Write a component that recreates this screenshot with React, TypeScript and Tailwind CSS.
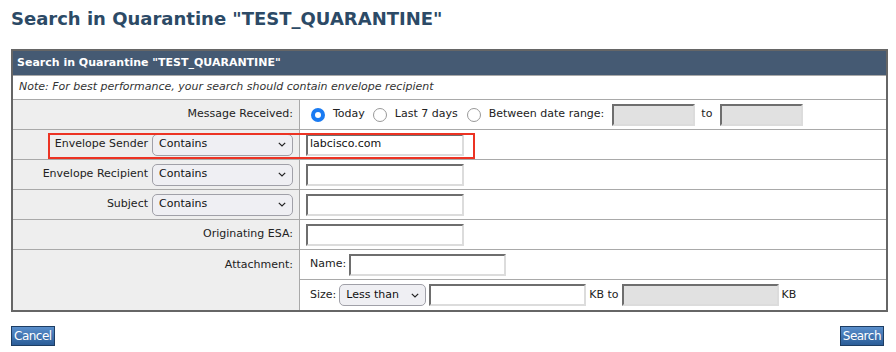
import React from "react";

const font = { fontFamily: 'Verdana, "DejaVu Sans", sans-serif' };

function Chevron() {
  return (
    <svg width="8" height="5" viewBox="0 0 8 5" className="shrink-0">
      <path d="M0.8 0.8 L4 4 L7.2 0.8" fill="none" stroke="#222" strokeWidth="1.2" />
    </svg>
  );
}

function Select({ label, w }: { label: string; w: string }) {
  return (
    <div
      className={`${w} h-[22px] rounded-[5px] border border-[#a0a0a8] bg-[#efeff3] flex items-center justify-between pl-[6px] pr-[6px] text-[11px] text-[#111]`}
    >
      <span>{label}</span>
      <Chevron />
    </div>
  );
}

function TextInput({ w, value, disabled }: { w: string; value?: string; disabled?: boolean }) {
  return (
    <div
      className={`${w} h-[22px] border-2 border-t-[#6e6e6e] border-l-[#6e6e6e] border-b-[#dcdcdc] border-r-[#dcdcdc] ${
        disabled ? "bg-[#e1e1e1]" : "bg-white"
      } flex items-center pl-[2px] text-[11px] text-[#111]`}
    >
      {value}
    </div>
  );
}

function Radio({ checked }: { checked?: boolean }) {
  return checked ? (
    <div className="w-[14px] h-[14px] rounded-full bg-[#1a7bf2] flex items-center justify-center">
      <div className="w-[6px] h-[6px] rounded-full bg-white" />
    </div>
  ) : (
    <div className="w-[14px] h-[14px] rounded-full border border-[#999999] bg-white" />
  );
}

function Row({ left, right, last }: { left: React.ReactNode; right: React.ReactNode; last?: boolean }) {
  return (
    <div className={`flex h-[30px] ${last ? "" : "border-b border-[#a9a9a9]"}`}>
      <div className="w-[287px] bg-[#eeeeee] border-r border-[#a9a9a9] flex items-center justify-end pr-[6px] gap-[4px] text-[11px] text-[#222]">
        {left}
      </div>
      <div className="flex-1 flex items-center pl-[6px] text-[11px] text-[#222]">{right}</div>
    </div>
  );
}

function Btn({ children }: { children: React.ReactNode }) {
  return (
    <button className="h-[20px] px-[2px] border border-[#1d3d63] bg-gradient-to-b from-[#5a8fcc] to-[#2b5d98] text-white text-[12px] tracking-[-0.5px] leading-[18px]">
      {children}
    </button>
  );
}

export default function App() {
  return (
    <div className="w-[896px] h-[352px] bg-white pl-[11px] overflow-hidden" style={font}>
      <div className="h-[49px] pt-[6px] text-[18px] leading-[26px] font-bold text-[#2c4a66]">
        Search in Quarantine "TEST_QUARANTINE"
      </div>
      <div className="w-[877px] border-2 border-[#666666]">
        <div className="h-[24px] bg-[#455a73] text-white font-bold text-[11px] flex items-center pl-[4px]">
          Search in Quarantine "TEST_QUARANTINE"
        </div>
        <div className="h-[25px] border-t border-[#a9a9a9] border-b flex items-center pl-[6px] text-[11px] italic text-[#333]">
          Note: For best performance, your search should contain envelope recipient
        </div>
        <Row
          left={<span>Message Received:</span>}
          right={
            <div className="flex items-center pl-[5px]">
              <Radio checked />
              <span className="ml-[8px]">Today</span>
              <span className="ml-[8px]"><Radio /></span>
              <span className="ml-[8px]">Last 7 days</span>
              <span className="ml-[9px]"><Radio /></span>
              <span className="ml-[8px]">Between date range:</span>
              <span className="ml-[8px]"><TextInput w="w-[83px]" disabled /></span>
              <span className="ml-[6px]">to</span>
              <span className="ml-[8px]"><TextInput w="w-[83px]" disabled /></span>
            </div>
          }
        />
        <div className="relative">
          <Row
            left={
              <>
                <span>Envelope Sender</span>
                <Select label="Contains" w="w-[141px]" />
              </>
            }
            right={<TextInput w="w-[158px]" value="labcisco.com" />}
          />
          <div className="absolute left-[35px] top-[3px] w-[427px] h-[26px] border-2 border-[#ec3323] pointer-events-none" />
        </div>
        <Row
          left={
            <>
              <span>Envelope Recipient</span>
              <Select label="Contains" w="w-[141px]" />
            </>
          }
          right={<TextInput w="w-[158px]" />}
        />
        <Row
          left={
            <>
              <span>Subject</span>
              <Select label="Contains" w="w-[141px]" />
            </>
          }
          right={<TextInput w="w-[158px]" />}
        />
        <Row left={<span>Originating ESA:</span>} right={<TextInput w="w-[158px]" />} />
        <div className="flex h-[60px]">
          <div className="w-[287px] bg-[#eeeeee] border-r border-[#a9a9a9] flex justify-end pr-[6px] pt-[7px] text-[11px] text-[#222]">
            Attachment:
          </div>
          <div className="flex-1 flex flex-col text-[11px] text-[#222]">
            <div className="h-[30px] border-b border-[#a9a9a9] flex items-center pl-[10px]">
              <span>Name:</span>
              <span className="ml-[3px]"><TextInput w="w-[157px]" /></span>
            </div>
            <div className="h-[30px] flex items-center pl-[10px]">
              <span>Size:</span>
              <span className="ml-[3px]"><Select label="Less than" w="w-[87px]" /></span>
              <span className="ml-[3px]"><TextInput w="w-[157px]" /></span>
              <span className="ml-[3px]">KB to</span>
              <span className="ml-[3px]"><TextInput w="w-[157px]" disabled /></span>
              <span className="ml-[3px]">KB</span>
            </div>
          </div>
        </div>
      </div>
      <div className="w-[877px] flex justify-between mt-[14px] pr-[4px]">
        <Btn>Cancel</Btn>
        <Btn>Search</Btn>
      </div>
    </div>
  );
}
